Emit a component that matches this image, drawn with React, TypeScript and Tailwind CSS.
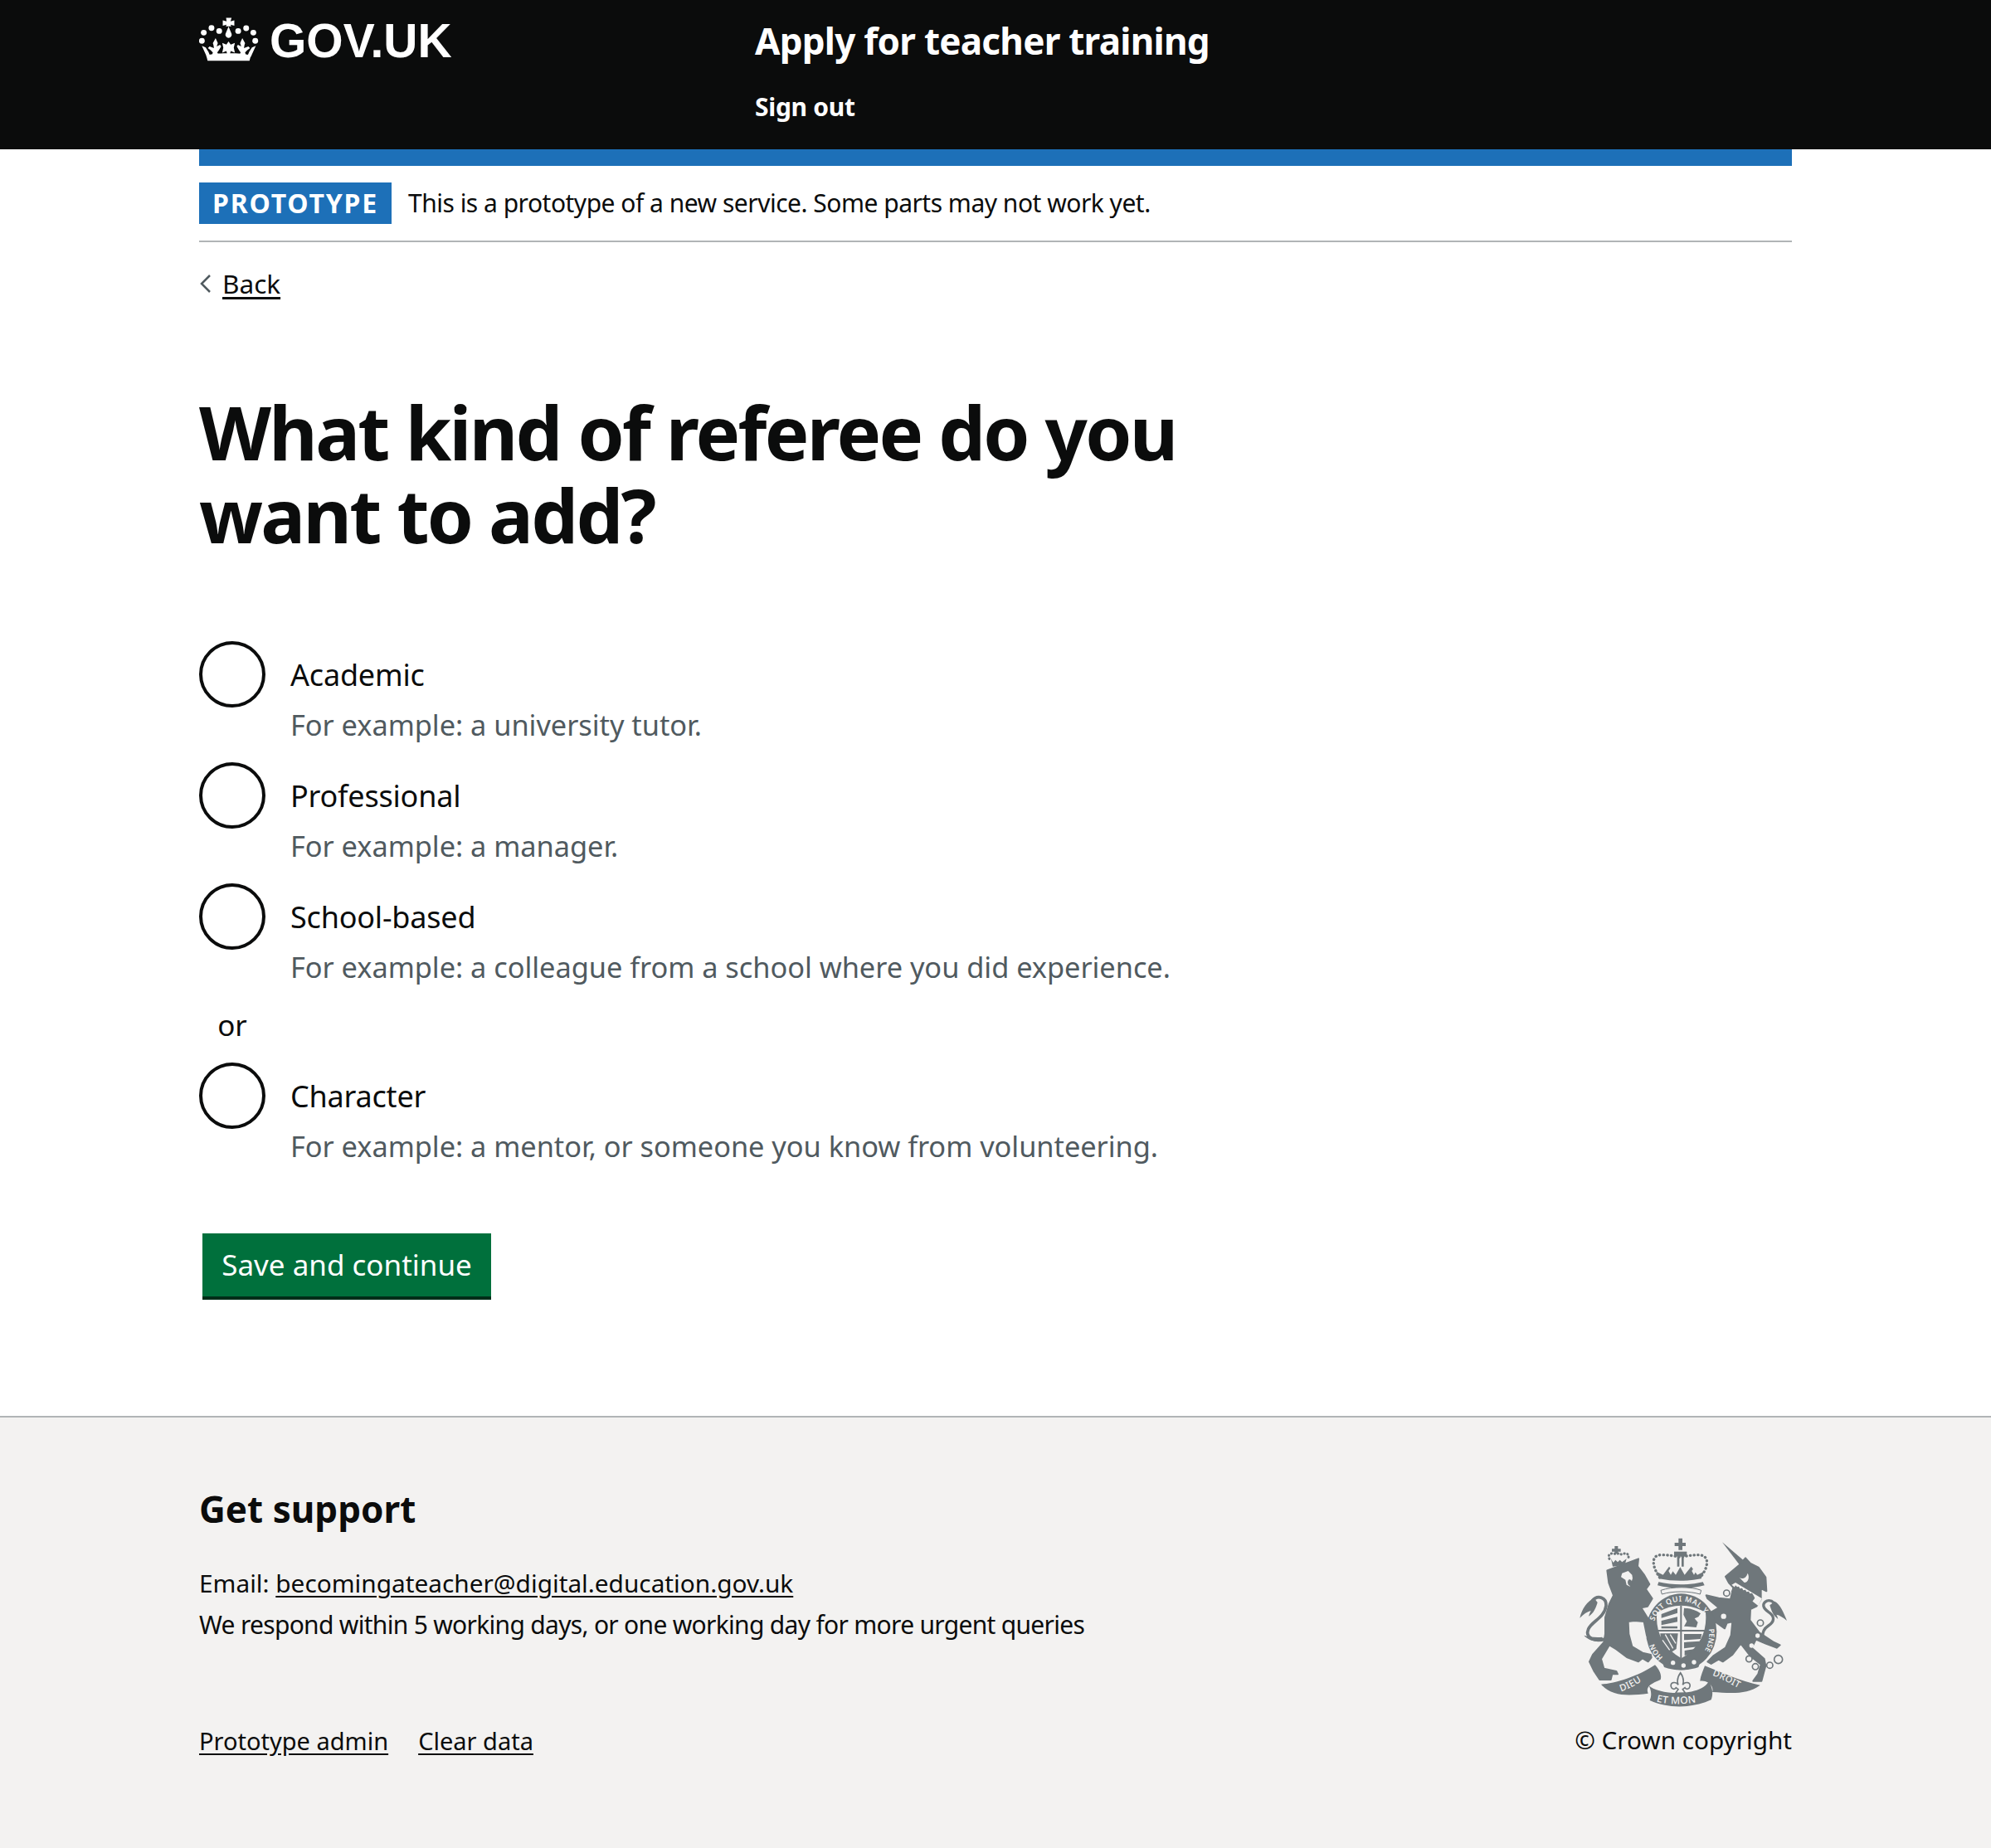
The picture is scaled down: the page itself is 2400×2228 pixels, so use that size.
import React from "react";

function Crown() {
  return (
    <svg viewBox="60 60 220 165" width="73" height="55" className="shrink-0" fill="#fff">
      <circle cx="70" cy="148" r="10.5" />
      <circle cx="77" cy="118" r="10.5" />
      <circle cx="105" cy="101" r="10.5" />
      <circle cx="133" cy="112" r="10.5" />
      <circle cx="202" cy="112" r="10.5" />
      <circle cx="231" cy="102" r="10.5" />
      <circle cx="257" cy="118" r="10.5" />
      <circle cx="264" cy="148" r="10.5" />
      <path d="M158 64h20l-4 13 14-4v20l-14-4 3 6h-20l3-6-14 4V73l14 4z" />
      <path d="M167 96l11 26a11.5 11.5 0 1 1-22 0z" />
      <path d="M167 150l8 11 15-6-4 18 4 18-15-6-4 14h-8l-4-14-15 6 4-18-4-18 15 6z" />
      <path d="M120 138l8 18-4 12 12-6 4 6-8 14-6 8 6 12h-26l4-12-8-8-10-8 6-6 10 4 6 2-2-12-2-6z" />
      <path d="M217 138l-8 18 4 12-12-6-4 6 8 14 6 8-6 12h26l-4-12 8-8 10-8-6-6-10 4-6 2 2-12 2-6z" />
      <path d="M70 166l14 6 10 16 6 14-12 4zM266 166l-14 6-10 16-6 14 12 4z" />
      <path d="M86 201c28-7 45-8 82-8s52 1 80 8l-5 19H91z" />
    </svg>
  );
}

function ArmsLabel({ href, size, spacing, weight, children }: { href: string; size: number; spacing: number; weight: number; children: string }) {
  return (
    <text fontFamily="'Noto Sans', sans-serif" fontSize={size} fontWeight={weight} fill="#f3f2f1" letterSpacing={spacing}>
      <textPath href={href}>{children}</textPath>
    </text>
  );
}

function Arms() {
  const c = "#6f777b";
  const bg = "#f3f2f1";
  return (
    <svg viewBox="0 0 900 720" width="300" height="240" className="block" fill={c}>
      <defs>
        <path id="gTop" d="M342 344A104 110 0 0 1 542 363" />
        <path id="gRight" d="M540 372A104 110 0 0 1 506 472" />
        <path id="gLeft" d="M374 474A104 110 0 0 1 338 410" />
        <path id="rL" d="M222 598C250 590 285 570 322 544" />
        <path id="rM" d="M350 634C400 648 480 645 526 628" />
        <path id="rR" d="M552 540C585 550 625 575 668 596" />
      </defs>

      {/* lion crown */}
      <path d="M199 72h12v10h10v10h-10v8h-12v-8h-10V82h10z" />
      <path d="M180 118c-8-18 8-24 25-16 6-4 12-4 18 0 18-8 32-2 24 18" fill="none" stroke={c} strokeWidth="9" strokeLinecap="round" strokeDasharray="1 11" />
      <path d="M186 118l8 14 8-10 8 8 8-8 8 8 16-12-6 22-44 6z" />

      {/* lion */}
      <path strokeLinejoin="round" stroke={c} strokeWidth="6" d="M172 160L285 118L282 145L305 175L325 210L312 228L335 262L318 290L295 295L345 375L350 395L335 405L315 395L305 345L270 342L248 345L250 390L262 435L300 458L330 465L332 475L320 490L300 478L285 490L245 475L205 445L180 430L150 480L160 515L205 525L210 535L190 535L185 555L145 555L125 525L108 490L120 465L160 420L165 390L165 330L180 280L195 250L178 205Z" />
      <path d="M226 170l22-8 14 14 2 12-4 14-6 16-12-6-4-18-16-10z" fill={bg} />
      <path d="M252 192c12 2 14 20 4 24-10 0-14-18-4-24z" />
      <path d="M165 408C130 420 90 405 104 372c12-28 58-40 64-84 2-30-30-42-50-18" fill="none" stroke={c} strokeWidth="11" />
      <path d="M125 260c-25 10-45 40-52 72 15-14 25-22 40-26-4 8-6 14-8 20 18-10 26-30 32-50z" />
      <path d="M88 395c20 6 45 8 66 6l4 10c-22 8-50 6-70-16z" />

      {/* unicorn */}
      <path d="M588 58l80 68-16 16z" />
      <path strokeLinejoin="round" stroke={c} strokeWidth="6" d="M650 140L672 115L690 135L720 150L745 185L748 235L728 225L728 265L712 290L690 300L688 340L722 385L775 420L797 430L785 440L745 425L710 410L695 440L740 480L745 505L730 560L700 560L718 535L728 500L690 470L655 425L625 465L590 490L575 482L548 498L535 490L555 470L600 440L620 395L625 345L605 350L597 370L555 340L545 312L575 295L535 262L530 250L575 260L618 265L628 222L612 205L600 182Z" />
      <path d="M622 212l14-8 96 58-14 26z" fill={bg} />
      <path d="M632 222l4-8 6 6 6-2 4 8 8-2 4 8 8-2 4 8 8-2 4 8 8-2 6 10 4 8-10 14-76-38z" />
      <path d="M650 186c10 6 24 4 30-16 8 14 2 34-12 34z" fill={bg} />
      <circle cx="604" cy="242" r="11" fill={bg} stroke={c} strokeWidth="5" />
      <circle cx="593" cy="326" r="12" fill={bg} stroke={c} strokeWidth="5" />
      <circle cx="726" cy="350" r="11" fill={bg} stroke={c} strokeWidth="5" />
      <circle cx="716" cy="396" r="8" fill={bg} />
      <circle cx="694" cy="432" r="8" fill={bg} />
      <circle cx="685" cy="480" r="11" fill={bg} stroke={c} strokeWidth="5" />
      <circle cx="708" cy="508" r="11" fill={bg} stroke={c} strokeWidth="5" />
      <circle cx="760" cy="503" r="11" fill={bg} stroke={c} strokeWidth="5" />
      <circle cx="791" cy="482" r="15" fill={bg} stroke={c} strokeWidth="5" />
      <path d="M735 400c-2-15 2-28 20-40 22-14 25-34 0-50-20-14-25-30-5-40 22-6 35 20 35 20" fill="none" stroke={c} strokeWidth="10" />
      <path d="M778 272c20 10 32 40 44 70-14-12-26-20-38-22 4 6 4 10 6 16-18-12-24-30-30-50z" />

      {/* royal crown */}
      <path d="M430 44h14v16h12v12h-12v14h-14V72h-14V60h14z" />
      <path d="M414 92h46v18h-46z" />
      <path d="M425 110h8v36h-8zM441 110h8v36h-8z" />
      <path d="M362 186c-28-40-34-84 8-82 24 0 46 4 66 8 22-4 44-8 66-8 42 0 38 44 6 82" fill="none" stroke={c} strokeWidth="10" strokeLinecap="round" strokeDasharray="1 13" />
      <path d="M360 190l-10-26 24 12 22-30 24 30 16-28 16 28 24-30 22 30 24-12-10 26c-50 10-102 10-152 0z" />
      <path d="M394 162l8-12 8 12-8 14zM478 162l8-12 8 12-8 14z" fill={bg} />
      <path d="M358 202c50 12 110 12 160 0l6 12c-50 14-124 14-170 0z" />

      {/* garter */}
      <ellipse cx="440" cy="382" rx="128" ry="138" />
      <path d="M366 232c40-14 112-14 146 0l-4 14c-40-12-100-12-138 0z" fill={bg} stroke={c} strokeWidth="3" />
      <path d="M352 312Q440 262 528 312Q538 420 440 478Q342 420 352 312Z" fill={bg} />
      <rect x="436" y="287" width="6" height="190" />
      <rect x="350" y="375" width="182" height="6" />
      <path d="M368 318l58-22v18l-58 18zM368 342l58-14v18l-58 12zM368 362h58v8h-58z" />
      <path d="M450 296c24 2 44 8 60 20l-8 12-14 6 12 14-6 18-44-4 10-18-12-24z" />
      <path d="M364 388h64l-6 56-24 16c-20-16-32-42-34-72z" />
      <path d="M382 392l28 50M372 412l26 36M400 392l20 32" fill="none" stroke={bg} strokeWidth="4" />
      <path d="M450 390h64l-4 18-60 4zM450 420l56-4-6 20-50 6zM452 450l38-6-20 18-18 6z" />

      <ArmsLabel href="#gTop" size={27} spacing={1.5} weight={600}>SOIT QUI MAL Y</ArmsLabel>
      <ArmsLabel href="#gRight" size={26} spacing={0} weight={600}>PENSE</ArmsLabel>
      <ArmsLabel href="#gLeft" size={26} spacing={0} weight={600}>HON</ArmsLabel>

      <path d="M370 488c40 28 100 28 140 0l-8 22c-40 14-88 14-124 0z" />
      <circle cx="410" cy="494" r="8" fill={bg} />
      <circle cx="448" cy="504" r="8" fill={bg} />
      <circle cx="486" cy="492" r="8" fill={bg} />

      {/* fleur */}
      <path d="M437 530c10 14 14 28 8 44 8-12 30-12 26 6-2 10-14 12-18 4l-8 6 10 14h-36l10-14-8-6c-4 8-16 6-18-4-4-18 18-18 26-6-6-16-2-30 8-44z" fill="none" stroke={c} strokeWidth="5" />

      {/* ribbons */}
      <path d="M150 572C200 570 290 540 345 502C362 520 370 540 365 555C330 570 310 580 320 605C260 612 190 620 150 572Z" />
      <path d="M322 575C350 610 510 620 540 560C555 590 555 610 548 628C480 660 390 660 326 630C335 610 330 590 322 575Z" />
      <path d="M525 505C590 530 650 560 725 575C680 610 620 604 552 600C560 575 530 555 508 560C510 540 520 520 525 505Z" />
      <ArmsLabel href="#rL" size={34} spacing={1} weight={500}>DIEU</ArmsLabel>
      <ArmsLabel href="#rM" size={36} spacing={1} weight={500}>ET MON</ArmsLabel>
      <ArmsLabel href="#rR" size={33} spacing={1} weight={500}>DROIT</ArmsLabel>
    </svg>
  );
}

function Radio({ label, hint }: { label: string; hint: string }) {
  return (
    <div className="flex min-h-[126px] gap-[30px]">
      <span className="block h-[80px] w-[80px] shrink-0 rounded-full border-[4px] border-[#0b0c0c] bg-white" />
      <div className="pt-[16px]">
        <div className="text-[36px] leading-[50px] tracking-[-0.2px] text-[#0b0c0c]">{label}</div>
        <div className="mt-[10px] text-[34.4px] leading-[50px] tracking-[-0.05px] text-[#505a5f]">{hint}</div>
      </div>
    </div>
  );
}

export default function App() {
  return (
    <div className="flex min-h-[2228px] w-full flex-col bg-white font-['Noto_Sans',Arial,sans-serif] text-[#0b0c0c]">
      <header className="h-[180px] bg-[#0b0c0c] text-white">
        <div className="mx-auto flex w-[1920px]">
          <div className="flex w-[670px] items-start gap-[12px] pt-[20px]">
            <Crown />
            <span className="-mt-[1px] font-['Liberation_Sans',Arial,sans-serif] text-[57px] font-bold leading-[60px]">GOV.UK</span>
          </div>
          <div className="pt-[19px]">
            <div className="text-[44px] font-bold leading-[60px] tracking-[-0.75px]">Apply for teacher training</div>
            <div className="mt-[30px] text-[30px] font-bold leading-[40px] tracking-[-0.3px]">Sign out</div>
          </div>
        </div>
      </header>

      <main className="mx-auto w-[1920px] grow">
        <div className="h-[20px] bg-[#1d70b8]" />
        <div className="flex items-center gap-[20px] border-b-2 border-[#b1b4b6] py-[20px]">
          <strong className="flex h-[50px] w-[232px] items-center justify-center bg-[#1d70b8] text-[32px] font-bold tracking-[1.8px] text-white">PROTOTYPE</strong>
          <span className="text-[30px] leading-[50px] tracking-[-0.5px]">This is a prototype of a new service. Some parts may not work yet.</span>
        </div>
        <div className="mt-[30px] flex items-center gap-[12px] text-[31.5px] leading-[40px]">
          <svg width="16" height="24" viewBox="0 0 16 24" fill="none" stroke="#505a5f" strokeWidth="2.5">
            <path d="M13 2 3 12l10 10" />
          </svg>
          <a className="underline underline-offset-[4px]">Back</a>
        </div>
        <h1 className="mt-[108px] w-[1280px] text-[90px] font-bold leading-[100px] tracking-[-2.7px]">What kind of referee do you want to add?</h1>
        <div className="mt-[103px] flex flex-col">
          <div className="mb-[20px]"><Radio label="Academic" hint="For example: a university tutor." /></div>
          <div className="mb-[20px]"><Radio label="Professional" hint="For example: a manager." /></div>
          <div className="mb-[20px]"><Radio label="School-based" hint="For example: a colleague from a school where you did experience." /></div>
          <div className="mb-[20px] w-[80px] text-center text-[35px] leading-[50px]">or</div>
          <Radio label="Character" hint="For example: a mentor, or someone you know from volunteering." />
        </div>
        <button className="ml-[4px] mt-[80px] block h-[76px] w-[348px] bg-[#00703c] text-center text-[35px] leading-[50px] text-white shadow-[0_4px_0_#002d18]">Save and continue</button>
      </main>

      <footer className="mt-[133px] h-[521px] border-t-2 border-[#b1b4b6] bg-[#f3f2f1]">
        <div className="mx-auto flex h-full w-[1920px] justify-between">
          <div className="pt-[80px]">
            <h2 className="text-[44px] font-bold leading-[60px]">Get support</h2>
            <p className="mt-[35px] text-[29.8px] leading-[50px]">
              Email: <a className="underline underline-offset-[4px]">becomingateacher@digital.education.gov.uk</a>
            </p>
            <p className="text-[30px] leading-[50px] tracking-[-0.7px]">We respond within 5 working days, or one working day for more urgent queries</p>
            <div className="mt-[90px] flex gap-[36px] text-[29px] leading-[50px]">
              <a className="underline underline-offset-[4px]">Prototype admin</a>
              <a className="underline underline-offset-[4px]">Clear data</a>
            </div>
          </div>
          <div className="flex flex-col items-end">
            <div className="mt-[131px] -mr-[20px]"><Arms /></div>
            <div className="mt-[-7px] text-[29.7px] leading-[50px]">© Crown copyright</div>
          </div>
        </div>
      </footer>
    </div>
  );
}
